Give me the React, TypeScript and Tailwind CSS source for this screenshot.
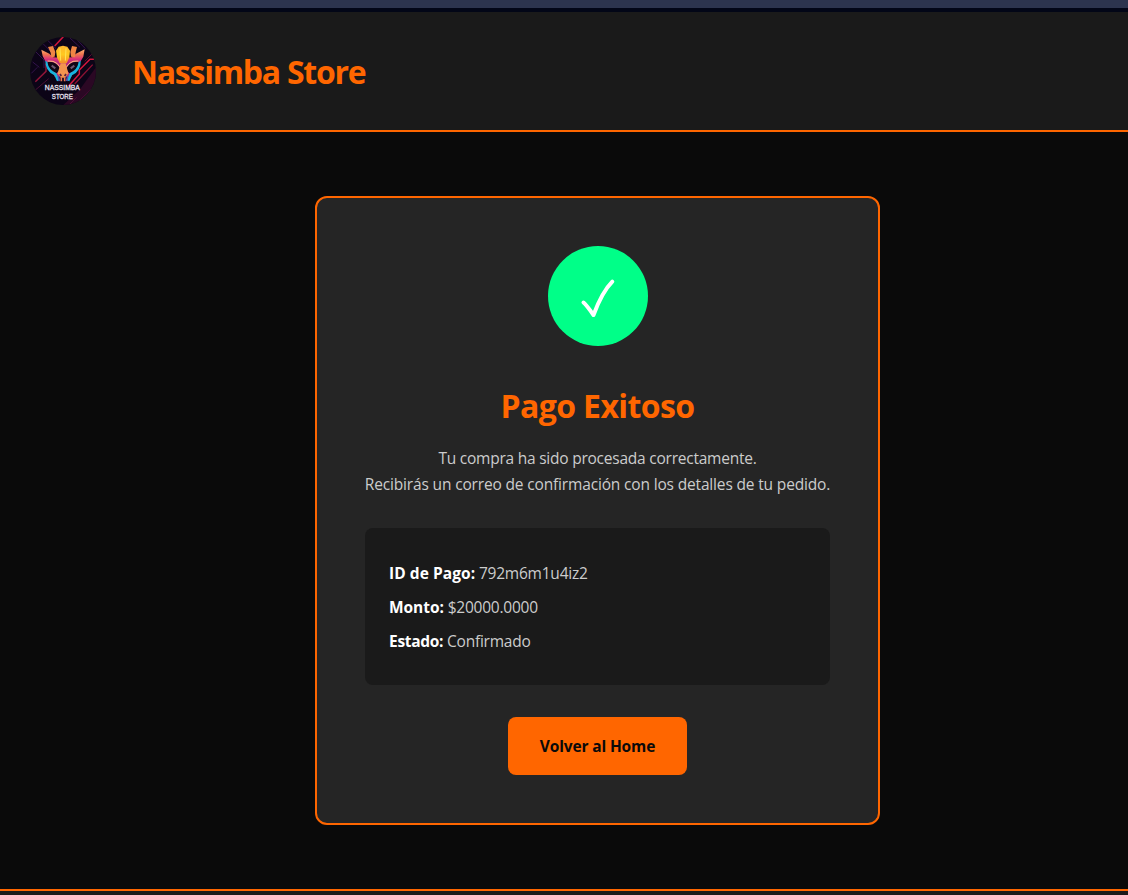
import React from "react";

function Logo() {
  return (
    <svg viewBox="30 21 198 204" className="h-[68px] w-[66px] shrink-0" aria-label="Nassimba Store">
      <defs>
        <clipPath id="disc"><ellipse cx="129" cy="123" rx="99" ry="102" /></clipPath>
        <linearGradient id="crown" x1="0" y1="0" x2="0" y2="1">
          <stop offset="0" stopColor="#ffb52e" />
          <stop offset="0.5" stopColor="#ffc91f" />
          <stop offset="1" stopColor="#f58a2a" />
        </linearGradient>
        <linearGradient id="horn" x1="0" y1="57" x2="0" y2="98" gradientUnits="userSpaceOnUse">
          <stop offset="0" stopColor="#ffb070" />
          <stop offset="0.4" stopColor="#ee7450" />
          <stop offset="0.75" stopColor="#d9307c" />
          <stop offset="1" stopColor="#b8287c" />
        </linearGradient>
      </defs>
      <g clipPath="url(#disc)">
        <rect x="30" y="21" width="198" height="204" fill="#0c0417" />
        <path d="M228 112V225H130L180 178L200 150Z" fill="#2b0824" />
        <g fill="none" strokeWidth="3" stroke="#34134d">
          <path d="M48 66l24 24v24M38 96l20 16M70 42l30 30M82 30l26 26M34 130l18-18M150 24l30 28M172 30l24 26" />
          <path d="M46 180l40-34M174 216l48-46M150 222l20-20" stroke="#4d0e36" />
        </g>
        <g fill="none" stroke="#d4163d" strokeWidth="4.5">
          <path d="M130 20L104 48" />
          <path d="M46 155L78 124V102L88 92" stroke="#8d1537" />
          <path d="M224 88h-14L178 120V132L146 168" />
          <path d="M218 104L186 138L164 162" stroke="#8a1232" strokeWidth="4" />
          <path d="M216 72L194 94" stroke="#5b0e30" strokeWidth="3" />
        </g>
        <path d="M64 59L88 71L100 82L127 84L156 82L168 71L194 58L190 80L182 94L168 104L154 140H104L90 104L76 94L68 78Z" fill="url(#horn)" />
        <path d="M84 51L99 48L106 66L104 80L94 82L92 68Z M156 48L171 51L167 67L165 82L153 80L151 66Z" fill="#ef8545" />
        <path d="M116 50L129 47L142 50L150 62L148 82L140 100H119L111 82L108 62Z" fill="url(#crown)" />
        <path d="M120 55L122 92M138 55L136 92" stroke="#ffe354" strokeWidth="3" />
        <path d="M82 96Q107 92 121 117L110 130Q90 124 82 96ZM176 96Q151 92 138 117L148 130Q169 124 176 96Z" fill="#110615" />
        <path d="M95 107l11 8M163 107l-11 8" stroke="#6c5871" strokeWidth="6" />
        <path d="M83 93Q101 91 112 101L121 113M175 93Q157 91 147 101L138 113" fill="none" stroke="#ffc07c" strokeWidth="3" />
        <path d="M76 92L82 96Q86 120 109 130L119 151L111 154L103 136Q75 122 76 92ZM182 92L176 96Q172 120 149 130L140 151L148 154L156 136Q184 122 182 92Z" fill="#18b4dd" />
        <path d="M122 100h15l8 30-9 13h-14l-9-13Z" fill="#f3944f" />
        <path d="M115 138l3 15M143 138l-3 15" stroke="#5b4bab" strokeWidth="5" />
        <path d="M120 132l4 6M138 132l-4 6" stroke="#512140" strokeWidth="5" />
        <path d="M124 142v12M134 142v12" stroke="#ed7654" strokeWidth="5" />
        <g fill="#eee6f4" stroke="#eee6f4" strokeWidth="0.8" textAnchor="middle" className="font-['Liberation_Sans'] text-[22px]">
          <text x="127" y="181" textLength="105" lengthAdjust="spacingAndGlyphs">NASSIMBA</text>
          <text x="127" y="208" textLength="63" lengthAdjust="spacingAndGlyphs">STORE</text>
        </g>
      </g>
    </svg>
  );
}

const details = [
  { label: "ID de Pago:", value: "792m6m1u4iz2", labelClass: "tracking-[0.06px]" },
  { label: "Monto:", value: "$20000.0000", labelClass: "tracking-[-0.05px]" },
  { label: "Estado:", value: "Confirmado", labelClass: "tracking-[-0.3px]" },
];

export default function App() {
  return (
    <div className="flex h-[895px] w-full flex-col overflow-hidden bg-[#0a0a0a] font-['Open_Sans',sans-serif] text-[15.5px] text-[#cccccc]">
      <div className="h-3 shrink-0 border-b-4 border-[#020617] bg-[#2c344e]" />
      <header className="flex h-[120px] shrink-0 items-center gap-9 border-b-2 border-[#ff6600] bg-[#1a1a1a] pl-[30px]">
        <div className="-mt-px flex h-[68px] items-center"><Logo /></div>
        <h1 className="pt-[2px] text-[32px] leading-[44px] font-bold tracking-[-1.25px] whitespace-nowrap text-[#ff6600]">Nassimba Store</h1>
      </header>
      <main className="h-[757px] shrink-0 pt-16 pl-[315px]">
        <section className="flex h-[629px] w-[565px] flex-col items-center rounded-xl border-2 border-[#ff6600] bg-[#252525] px-12 pt-12">
          <div className="flex size-[100px] shrink-0 items-center justify-center rounded-full bg-[#00ff88]">
            <svg viewBox="0 0 100 100" className="size-[100px]" aria-label="Confirmado">
              <path d="M35.5 56.5C38 58.5 42 64 45.5 69C50 57 56 44 64.3 35.7" fill="none" stroke="white" strokeWidth="4" strokeLinecap="round" strokeLinejoin="round" />
            </svg>
          </div>
          <h2 className="mt-[34px] text-[32px] leading-[51px] font-bold tracking-[-0.6px] whitespace-nowrap text-[#ff6600]">Pago Exitoso</h2>
          <p className="mt-[14px] flex flex-col items-center leading-[26px] whitespace-nowrap">
            <span className="tracking-[-0.23px]">Tu compra ha sido procesada correctamente.</span>
            <span className="tracking-[-0.16px]">Recibirás un correo de confirmación con los detalles de tu pedido.</span>
          </p>
          <div className="mt-[31px] flex h-[157px] w-[465px] shrink-0 flex-col gap-2 rounded-lg bg-[#1a1a1a] px-6 pt-8">
            {details.map((item) => (
              <p key={item.label} className="leading-[26px] tracking-[-0.23px] whitespace-nowrap">
                <strong className={`text-white ${item.labelClass}`}>{item.label}</strong> <span>{item.value}</span>
              </p>
            ))}
          </div>
          <button className="mt-8 h-[58px] w-[179px] shrink-0 rounded-lg bg-[#ff6600] pt-0.5 font-bold tracking-[-0.15px] whitespace-nowrap text-[#0a0a0a]">Volver al Home</button>
        </section>
      </main>
      <footer className="grow border-t-2 border-[#ff6600] bg-[#1a1a1a]" />
    </div>
  );
}
